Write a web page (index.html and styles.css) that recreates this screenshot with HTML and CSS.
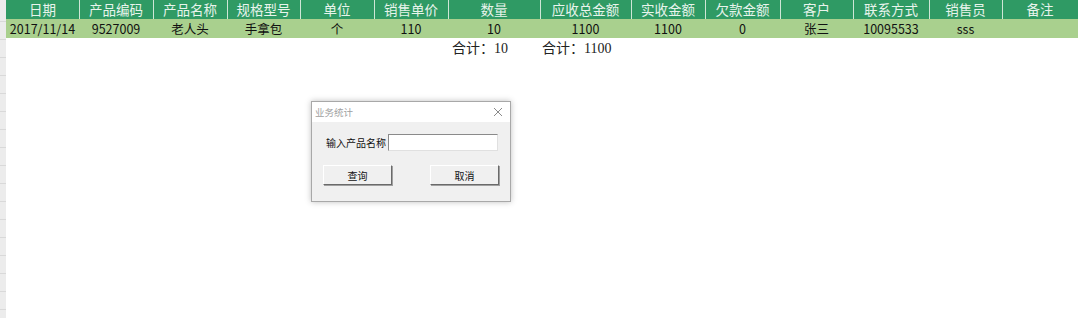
FILE: index.html
```html
<!DOCTYPE html>
<html lang="zh-CN">
<head>
    <meta charset="UTF-8">
    <title>业务统计</title>
    <link rel="stylesheet" href="styles.css">
</head>
<body>
    <div class="sheet">
        <div class="row-heads"></div>
        <div class="grid">
            <table class="data">
                <thead>
                    <tr>
                        <th class="c1">日期</th>
                        <th class="c2">产品编码</th>
                        <th class="c3">产品名称</th>
                        <th class="c4">规格型号</th>
                        <th class="c5">单位</th>
                        <th class="c6">销售单价</th>
                        <th class="c7">数量</th>
                        <th class="c8">应收总金额</th>
                        <th class="c9">实收金额</th>
                        <th class="c10">欠款金额</th>
                        <th class="c11">客户</th>
                        <th class="c12">联系方式</th>
                        <th class="c13">销售员</th>
                        <th class="c14">备注</th>
                    </tr>
                </thead>
                <tbody>
                    <tr>
                        <td>2017/11/14</td>
                        <td>9527009</td>
                        <td>老人头</td>
                        <td>手拿包</td>
                        <td>个</td>
                        <td>110</td>
                        <td>10</td>
                        <td>1100</td>
                        <td>1100</td>
                        <td>0</td>
                        <td>张三</td>
                        <td>10095533</td>
                        <td>sss</td>
                        <td></td>
                    </tr>
                </tbody>
            </table>
            <div class="totals">
                <span class="total">合计：10</span>
                <span class="total">合计：1100</span>
            </div>
        </div>

        <div class="dialog">
            <div class="dialog-title">
                <span>业务统计</span>
                <svg class="close" width="10" height="10" viewBox="0 0 10 10">
                    <path d="M1 1 L9 9 M9 1 L1 9" stroke="#8a8a8a" stroke-width="1" fill="none"/>
                </svg>
            </div>
            <div class="dialog-body">
                <div class="field">
                    <label for="pname">输入产品名称</label>
                    <input type="text" id="pname">
                </div>
                <div class="buttons">
                    <button class="btn">查询</button>
                    <button class="btn">取消</button>
                </div>
            </div>
        </div>
    </div>
</body>
</html>
```

FILE: styles.css
```css
body {
    margin: 0;
    padding: 0;
    background-color: #ffffff;
    font-family: "Noto Sans CJK SC", "Noto Sans", sans-serif;
}

.sheet {
    display: flex;
    height: 318px;
    position: relative;
    overflow: hidden;
}

.row-heads {
    width: 6px;
    flex: none;
    background-color: #ececec;
    background-image: repeating-linear-gradient(to bottom, transparent 0, transparent 17px, #d9d9d9 17px, #d9d9d9 18px);
    background-position: 0 4px;
}

.grid {
    width: 1072px;
}

.data {
    border-collapse: collapse;
    table-layout: fixed;
    width: 1072px;
}

.data th,
.data td {
    height: 19px;
    padding: 0;
    border: none;
    text-align: center;
    white-space: nowrap;
    overflow: hidden;
    line-height: 19px;
}

.data th {
    background-color: #2f9a64;
    color: #e8f4ec;
    font-size: 13.5px;
    font-weight: normal;
    box-shadow: inset 1px 0 0 #cfe6d6;
}

.data th.c1 {
    box-shadow: none;
}

.data td {
    background-color: #a9d08e;
    color: #111;
    font-size: 12.5px;
}

.c1 { width: 73px; }
.c2 { width: 74px; }
.c3 { width: 74px; }
.c4 { width: 73px; }
.c5 { width: 74px; }
.c6 { width: 74px; }
.c7 { width: 92px; }
.c8 { width: 91px; }
.c9 { width: 74px; }
.c10 { width: 75px; }
.c11 { width: 73px; }
.c12 { width: 76px; }
.c13 { width: 73px; }
.c14 { width: 76px; }

.totals {
    display: flex;
    padding-left: 446px;
    gap: 34px;
    margin-top: 2px;
    font-family: "Liberation Serif", "Noto Sans CJK SC", serif;
    font-size: 14px;
    color: #222;
    line-height: 17px;
}

.dialog {
    position: absolute;
    left: 311px;
    top: 101px;
    width: 198px;
    height: 99px;
    border: 1px solid #a8a8a8;
    background-color: #f0f0f0;
    box-shadow: 0 0 6px rgba(0, 0, 0, 0.25);
    font-size: 10px;
    color: #111;
}

.dialog-title {
    height: 20px;
    background-color: #ffffff;
    display: flex;
    align-items: center;
    justify-content: space-between;
    padding: 0 7px 0 3px;
    color: #a0a0a0;
    font-size: 9.5px;
}

.dialog-body {
    padding: 12px 11px 0 14px;
}

.field {
    display: flex;
    align-items: center;
    gap: 2px;
}

.field label {
    white-space: nowrap;
    width: 60px;
    line-height: 17px;
}

.field input {
    width: 106px;
    height: 13px;
    margin: 0;
    padding: 1px;
    border: 1px solid #8a8a8a;
    border-right-color: #e0e0e0;
    border-bottom-color: #e0e0e0;
    background-color: #ffffff;
}

.buttons {
    display: flex;
    justify-content: space-between;
    margin-top: 14px;
    margin-left: -3px;
}

.btn {
    width: 69px;
    height: 20px;
    margin: 0;
    padding: 0;
    font-family: inherit;
    font-size: 10px;
    color: #111;
    background-color: #f0f0f0;
    border: 1px solid #ffffff;
    border-right-color: #6a6a6a;
    border-bottom-color: #6a6a6a;
    box-shadow: 1px 1px 0 #a0a0a0;
}
```
